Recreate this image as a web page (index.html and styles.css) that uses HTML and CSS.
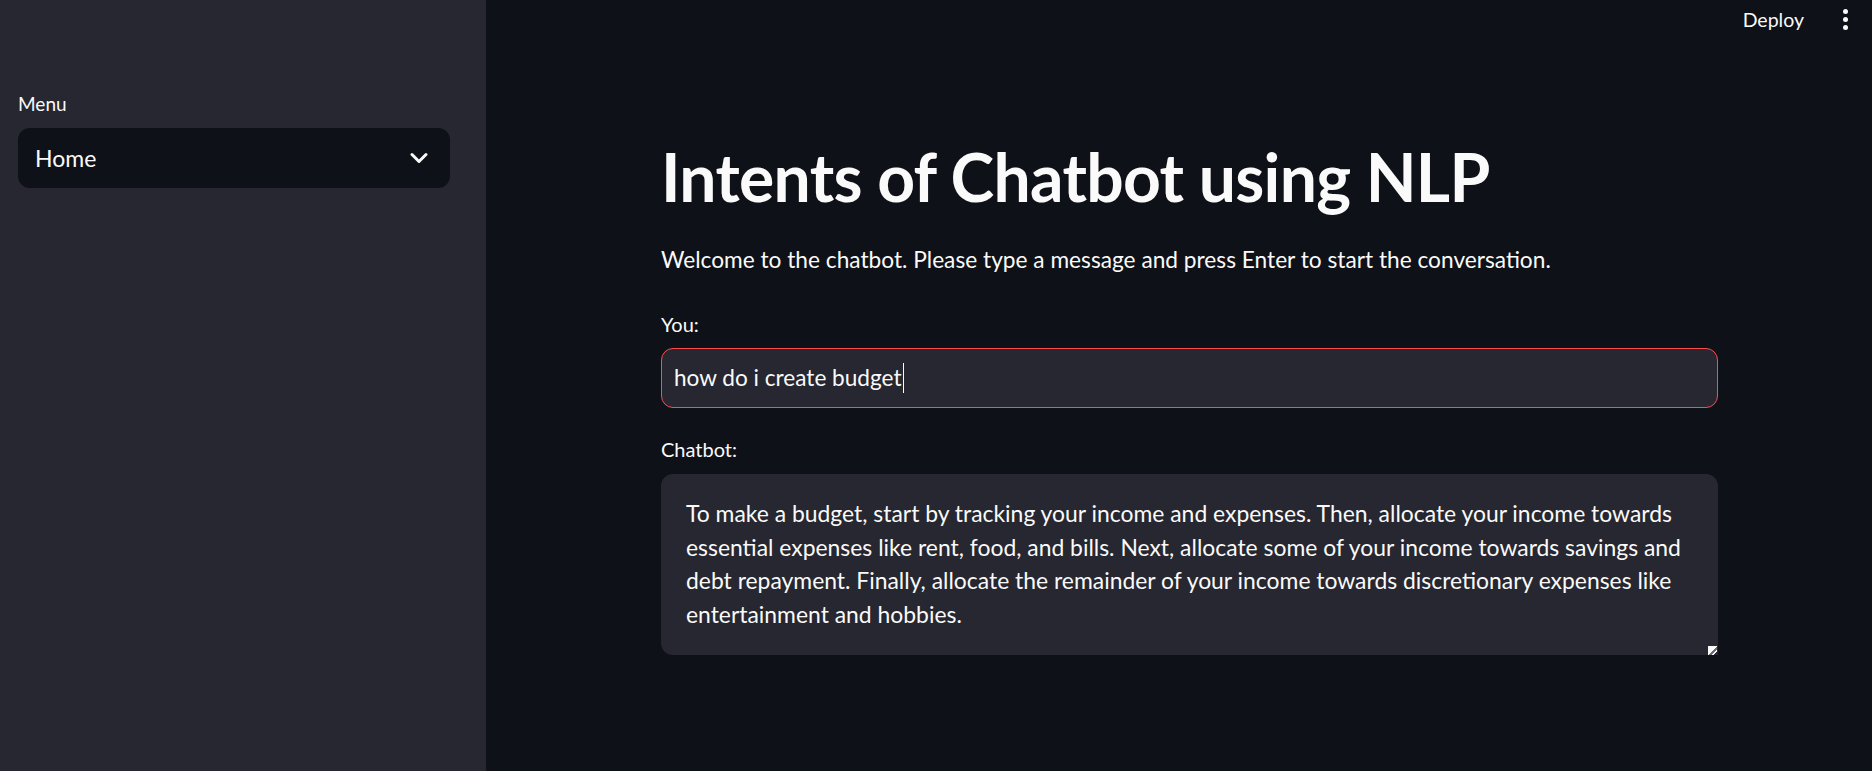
FILE: index.html
```html
<!DOCTYPE html>
<html lang="en">
<head>
<meta charset="utf-8">
<title>Intents of Chatbot using NLP</title>
<link rel="stylesheet" href="styles.css">
</head>
<body>
<div class="app">
  <aside class="sidebar">
    <div class="label">Menu</div>
    <div class="select">
      <span class="select-value">Home</span>
      <svg class="chevron" width="18" height="12" viewBox="0 0 18 12"><path d="M2 2.5 L9 9.5 L16 2.5" fill="none" stroke="#fafafa" stroke-width="3" stroke-linecap="round" stroke-linejoin="round"/></svg>
    </div>
  </aside>
  <main class="main">
    <header class="topbar">
      <span class="deploy">Deploy</span>
      <span class="kebab"><i></i><i></i><i></i></span>
    </header>
    <section class="content">
      <h1 class="title">Intents of Chatbot using NLP</h1>
      <p class="intro">Welcome to the chatbot. Please type a message and press Enter to start the conversation.</p>
      <div class="label">You:</div>
      <div class="input"><span class="input-text">how do i create budget</span><span class="caret"></span></div>
      <div class="label label-chat">Chatbot:</div>
      <div class="textarea">
        <div class="textarea-text">To make a budget, start by tracking your income and expenses. Then, allocate your income towards<br>essential expenses like rent, food, and bills. Next, allocate some of your income towards savings and<br>debt repayment. Finally, allocate the remainder of your income towards discretionary expenses like<br>entertainment and hobbies.</div>
        <span class="resize"></span>
      </div>
    </section>
  </main>
</div>
</body>
</html>
```
FILE: styles.css
```css
* { box-sizing: border-box; }
html, body { margin: 0; padding: 0; }
body {
  background: #0e1117;
  color: #fafafa;
  font-family: Lato, "Noto Sans", sans-serif;
}
.app {
  display: flex;
  height: 771px;
}
.sidebar {
  width: 486px;
  flex: none;
  background: #262730;
  padding: 89px 36px 0 18px;
}
.label {
  font-size: 20px;
  line-height: 30px;
  height: 30px;
  color: #fafafa;
}
.sidebar .label {
  font-size: 19px;
}
.select {
  margin-top: 9px;
  height: 60px;
  background: #0e1117;
  border-radius: 12px;
  display: flex;
  align-items: center;
  justify-content: space-between;
  padding: 0 22px 0 17px;
}
.select-value {
  font-size: 23px;
  line-height: 30px;
}
.main {
  flex: 1;
  display: flex;
  flex-direction: column;
}
.topbar {
  height: 44px;
  display: flex;
  justify-content: flex-end;
  align-items: center;
  padding-right: 24px;
  gap: 39px;
}
.deploy {
  font-size: 19.5px;
  line-height: 30px;
  margin-top: -5px;
}
.kebab {
  display: flex;
  flex-direction: column;
  gap: 3px;
  margin-top: -5px;
}
.kebab i {
  display: block;
  width: 5px;
  height: 5px;
  border-radius: 50%;
  background: #fafafa;
}
.content {
  padding: 93px 0 0 175px;
  width: 1232px;
}
.title {
  margin: 0;
  font-size: 66px;
  line-height: 80px;
  font-weight: 700;
  letter-spacing: -0.7px;
}
.intro {
  margin: 25px 0 31px;
  font-size: 22.7px;
  line-height: 36px;
}
.input {
  margin-top: 9px;
  height: 60px;
  background: #262730;
  border: 1px solid #ff4b4b;
  border-radius: 12px;
  display: flex;
  align-items: center;
  padding: 0 12px;
}
.input-text {
  font-size: 22.6px;
  line-height: 30px;
}
.caret {
  width: 1px;
  height: 30px;
  background: #fafafa;
  margin-left: 1px;
}
.label-chat {
  margin-top: 26px;
}
.textarea {
  margin-top: 10px;
  height: 181px;
  background: #262730;
  border-radius: 12px 12px 0 12px;
  padding: 23px 24px 0 25px;
  position: relative;
}
.textarea-text {
  font-size: 22.9px;
  line-height: 33.5px;
  white-space: nowrap;
}
.resize {
  position: absolute;
  right: 1px;
  bottom: 0;
  width: 9px;
  height: 9px;
  background: linear-gradient(135deg, #fafafa 55%, #6b6c75 55%, #6b6c75 70%, #fafafa 70%, #fafafa 80%, #262730 80%);
}
```
